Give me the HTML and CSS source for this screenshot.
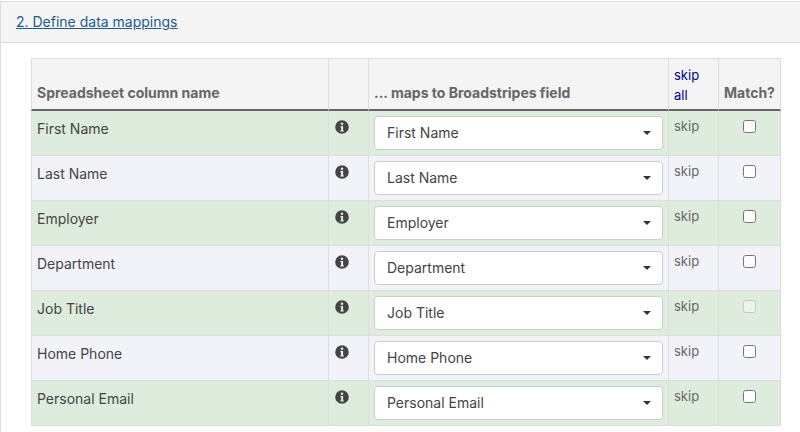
FILE: index.html
```html
<!DOCTYPE html>
<html lang="en">
<head>
<meta charset="utf-8">
<title>Define data mappings</title>
<link rel="stylesheet" href="styles.css">
</head>
<body>
<svg class="defs" width="0" height="0" aria-hidden="true">
  <symbol id="info" viewBox="0 0 14 14">
    <path fill-rule="evenodd" d="M7 .2a6.8 6.8 0 1 0 0 13.6A6.8 6.8 0 0 0 7 .2zM7 2.6a1.25 1.25 0 1 1 0 2.5 1.25 1.25 0 0 1 0-2.5zM5.4 6h2.7v4.4h.8v1.2H5.2v-1.2h.9V7.2h-.7z"/>
  </symbol>
</svg>
<section class="panel">
  <header class="panel-head"><a href="#">2. Define data mappings</a></header>
  <div class="panel-body">
    <table class="map">
      <colgroup><col class="c1"><col class="c2"><col class="c3"><col class="c4"><col class="c5"></colgroup>
      <thead>
        <tr>
          <th>Spreadsheet column name</th>
          <th></th>
          <th>... maps to Broadstripes field</th>
          <th class="skip-head"><a href="#">skip</a><br><a href="#">all</a></th>
          <th class="match-head">Match?</th>
        </tr>
      </thead>
      <tbody>
        <tr class="even"><td class="name">First Name</td><td class="ic"><svg class="i"><use href="#info"/></svg></td><td class="sel"><div class="select"><span>First Name</span><i class="caret"></i></div></td><td class="skip">skip</td><td class="chk"><input type="checkbox"></td></tr>
        <tr class="odd"><td class="name">Last Name</td><td class="ic"><svg class="i"><use href="#info"/></svg></td><td class="sel"><div class="select"><span>Last Name</span><i class="caret"></i></div></td><td class="skip">skip</td><td class="chk"><input type="checkbox"></td></tr>
        <tr class="even"><td class="name">Employer</td><td class="ic"><svg class="i"><use href="#info"/></svg></td><td class="sel"><div class="select"><span>Employer</span><i class="caret"></i></div></td><td class="skip">skip</td><td class="chk"><input type="checkbox"></td></tr>
        <tr class="odd"><td class="name">Department</td><td class="ic"><svg class="i"><use href="#info"/></svg></td><td class="sel"><div class="select"><span>Department</span><i class="caret"></i></div></td><td class="skip">skip</td><td class="chk"><input type="checkbox"></td></tr>
        <tr class="even"><td class="name">Job Title</td><td class="ic"><svg class="i"><use href="#info"/></svg></td><td class="sel"><div class="select"><span>Job Title</span><i class="caret"></i></div></td><td class="skip">skip</td><td class="chk"><input type="checkbox" disabled></td></tr>
        <tr class="odd"><td class="name">Home Phone</td><td class="ic"><svg class="i"><use href="#info"/></svg></td><td class="sel"><div class="select"><span>Home Phone</span><i class="caret"></i></div></td><td class="skip">skip</td><td class="chk"><input type="checkbox"></td></tr>
        <tr class="even"><td class="name">Personal Email</td><td class="ic"><svg class="i"><use href="#info"/></svg></td><td class="sel"><div class="select"><span>Personal Email</span><i class="caret"></i></div></td><td class="skip">skip</td><td class="chk"><input type="checkbox"></td></tr>
      </tbody>
    </table>
  </div>
</section>
</body>
</html>
```

FILE: styles.css
```css
html, body { margin: 0; padding: 0; background: #fff; overflow: hidden; }
body { font-family: Inter, Roboto, sans-serif; font-size: 14px; color: #444; height: 432px; }
.defs { position: absolute; }
.panel { margin-top: 1px; border-left: 1px solid #ddd; height: 431px; }
.panel-head { background: #f5f5f5; border-top: 1px solid #ddd; border-bottom: 1px solid #ddd; height: 42px; box-sizing: border-box; line-height: 40px; padding-left: 15px; font-size: 14px; }
.panel-head a { color: #1f5a8c; text-decoration: underline; }
.panel-body { padding: 15px 0 0 30px; }
.map { border-collapse: separate; border-spacing: 0; table-layout: fixed; width: 750px; }
.c1 { width: 298px; } .c2 { width: 40px; } .c3 { width: 300px; } .c4 { width: 50px; } .c5 { width: 62px; }
.map th, .map td { border-right: 1px solid #ddd; box-sizing: border-box; }
.map th:first-child, .map td:first-child { border-left: 1px solid #ddd; }
.map th { background: #f4f4f4; height: 53px; padding: 0 5px 6px; vertical-align: bottom; text-align: left; font-size: 14px; font-weight: 700; color: #666; line-height: 20px; border-top: 1px solid #ddd; border-bottom: 2px solid #666; }
.map th.skip-head { font-weight: 400; font-size: 13px; padding-bottom: 4px; line-height: 20px; }
.skip-head a { color: #00008b; text-decoration: none; }
.match-head { white-space: nowrap; }
.map td { height: 45px; padding: 0 5px; vertical-align: top; border-bottom: 1px solid #ddd; }
.even td { background: #deecde; }
.odd td { background: #f1f3f9; }
.map .name { padding-top: 8px; line-height: 20px; color: #444; }
.map .ic { padding: 9px 0 0 6px; }
.i { display: block; width: 14px; height: 14px; fill: #444; }
.map .sel { padding-top: 5px; }
.select { box-sizing: border-box; height: 34px; background: #fff; border: 1px solid #ccc; border-radius: 4px; padding: 0 12px 1px; display: flex; align-items: center; justify-content: space-between; color: #444; }
.caret { width: 0; height: 0; border-left: 4px solid transparent; border-right: 4px solid transparent; border-top: 4px solid #333; margin: 1px -1px 0 0; }
.map .skip { font-size: 13px; color: #666; padding-top: 7px; line-height: 16px; }
.chk { text-align: center; }
.chk input { margin: 9px 0 0; width: 13px; height: 13px; display: inline-block; vertical-align: top; }
```
